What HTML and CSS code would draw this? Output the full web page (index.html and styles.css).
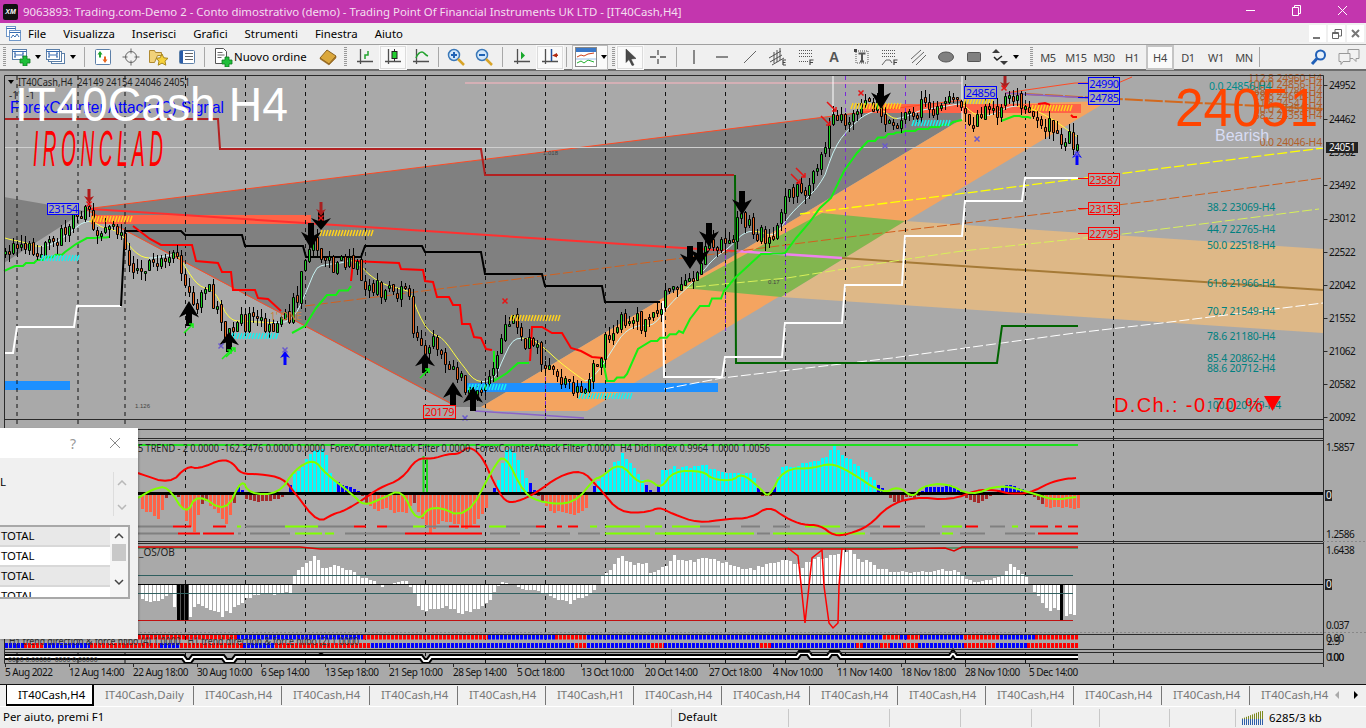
FILE: index.html
```html
<!DOCTYPE html>
<html lang="it">
<head>
<meta charset="utf-8">
<title>9063893: Trading.com-Demo 2</title>
<link rel="stylesheet" href="styles.css">
</head>
<body>
<div class="app">
  <header class="titlebar">
    <span class="logo">XM</span>
    <span class="title">9063893: Trading.com-Demo 2 - Conto dimostrativo (demo) - Trading Point Of Financial Instruments UK LTD - [IT40Cash,H4]</span>
    <div class="wincontrols">
      <svg width="46" height="23" viewBox="0 0 46 23"><path class="wc" d="M18 10.5h9"/></svg>
      <svg width="46" height="23" viewBox="0 0 46 23"><path class="wc" d="M18.5 7.5h6v8h-6zM20.5 7.5v-2h6v8h-2"/></svg>
      <svg width="46" height="23" viewBox="0 0 46 23"><path class="wc" d="M18 6l9 9M27 6l-9 9"/></svg>
    </div>
  </header>

  <nav class="menubar">
    <svg class="menuicon" width="16" height="17" viewBox="0 0 16 17"><rect x="1.5" y="1.5" width="9" height="10" class="i-doc"/><rect x="4.5" y="5.5" width="11" height="10" class="i-doc"/><path class="i-blue" d="M1.5 3.5h9M4.5 7.5h11M6 13l2-3 2 2 2-3 2 3"/></svg>
    <span class="menu">File</span><span class="menu">Visualizza</span><span class="menu">Inserisci</span><span class="menu">Grafici</span><span class="menu">Strumenti</span><span class="menu">Finestra</span><span class="menu">Aiuto</span>
    <div class="mdi">
      <span class="mdibtn"><svg width="16" height="16" viewBox="0 0 16 16"><path class="i-gray2" d="M3 12h7"/></svg></span>
      <span class="mdibtn"><svg width="16" height="16" viewBox="0 0 16 16"><path class="i-gray" d="M3.5 6.5h6v6h-6zM6 6V3.5h6.5V10H10M3.5 7.5h6"/></svg></span>
      <span class="mdibtn"><svg width="16" height="16" viewBox="0 0 16 16"><path class="i-gray2" d="M4 4l7 7M11 4l-7 7"/></svg></span>
    </div>
  </nav>

  <div class="toolbar">
    <i class="grip"></i>
    <span class="btn wide"><svg width="20" height="18" viewBox="0 0 20 18"><rect x="1.5" y="1.5" width="14" height="10" class="i-win"/><path class="i-blue" d="M1.5 3.5h14M4 9V5M3 5h2M3 9h2M12 9V5M11 5h2M11 9h2M4 7h8"/><path class="i-plus" d="M9 11h3V8h4v3h3v4h-3v3h-4v-3H9z"/></svg><b class="caret"></b></span>
    <span class="btn wide"><svg width="20" height="18" viewBox="0 0 20 18"><rect x="5.5" y="5.5" width="13" height="10" class="i-win"/><rect x="2.5" y="3.5" width="13" height="10" class="i-win"/><rect x="0.5" y="1.5" width="13" height="10" class="i-win"/><path class="i-blue" d="M.5 3.5h13M3 9V5M2 5h2M2 9h2M11 9V5M10 5h2M10 9h2M3 7h8"/></svg><b class="caret"></b></span>
    <i class="sep"></i>
    <span class="btn"><svg width="18" height="18" viewBox="0 0 18 18"><rect x="1.5" y="1.5" width="15" height="15" rx="1" class="i-win"/><path class="i-green" d="M6 3L3.500 6.500h1.500v3h2v-3h1.500z"/><path class="i-orange" d="M11 15l2.500-3.500H12v-3h-2v3H8.500z"/></svg></span>
    <span class="btn"><svg width="18" height="18" viewBox="0 0 18 18"><circle cx="9" cy="9" r="5.500" class="i-gray"/><path class="i-gray" d="M9 .5v5M9 12.500v5M.5 9h5M12.500 9h5"/></svg></span>
    <span class="btn"><svg width="20" height="18" viewBox="0 0 20 18"><path class="i-folder" d="M.5 2.500h5l1 2h6v3h-4l-3 7H.5z"/><path class="i-star" d="M13 6l1.800 3.800 4.200.5-3 2.800.8 4.100-3.800-2.100-3.800 2.100.8-4.100-3-2.800 4.200-.5z"/></svg></span>
    <span class="btn"><svg width="18" height="18" viewBox="0 0 18 18"><rect x="1.500" y="2.500" width="15" height="13" rx="1" class="i-win"/><path class="i-blue2" d="M2 3h3v12H2z"/><path class="i-gray" d="M7 5.500h8M7 8.500h8M7 11.500h8"/></svg></span>
    <i class="sep s2"></i>
    <span class="btn order"><svg width="19" height="20" viewBox="0 0 19 20"><path class="i-docw" d="M1.500 1.500h8l3 3v12h-11z"/><path class="i-gray" d="M3.500 5.500h5M3.500 8h7M3.500 10.500h4"/><path class="i-plus" d="M8 13h3v-3h4v3h3v4h-3v3h-4v-3H8z"/></svg><span class="ordertext">Nuovo ordine</span></span>
    <span class="btn"><svg width="18" height="18" viewBox="0 0 18 18"><path class="i-book" d="M1 10l7-8 9 6-7 8z"/><path class="i-bookb" d="M1 10l9 6 7-8v2l-7 7-9-6z"/></svg></span>
    <i class="grip mid"></i>
    <span class="btn"><svg width="18" height="18" viewBox="0 0 18 18"><path class="i-axis" d="M4.500 1v15M1 13.500h16"/><path class="i-green2" d="M9 11V7h3V3"/></svg></span>
    <span class="btn on"><svg width="18" height="18" viewBox="0 0 18 18"><path class="i-axis" d="M4.500 1v15M1 13.500h16"/><path class="i-cdl" d="M10.500 1v12"/><rect x="8" y="3.500" width="5" height="7" class="i-cdlb"/></svg></span>
    <span class="btn"><svg width="18" height="18" viewBox="0 0 18 18"><path class="i-axis" d="M4.500 1v15M1 13.500h16"/><path class="i-green2" d="M4 10c2-5 4-6 6-6s3 3 6 4"/></svg></span>
    <i class="sep nar"></i>
    <span class="btn"><svg width="18" height="18" viewBox="0 0 18 18"><circle cx="7" cy="7" r="5.500" class="i-lens"/><path class="i-blue3" d="M4 7h6M7 4v6"/><path class="i-handle" d="M11 11l6 6"/></svg></span>
    <span class="btn"><svg width="18" height="18" viewBox="0 0 18 18"><circle cx="7" cy="7" r="5.500" class="i-lens"/><path class="i-blue3" d="M4 7h6"/><path class="i-handle" d="M11 11l6 6"/></svg></span>
    <i class="sep s3"></i>
    <span class="btn"><svg width="18" height="18" viewBox="0 0 18 18"><path class="i-axis" d="M4.500 1v15M1 13.500h16"/><path class="i-greenf" d="M8 3.500l4 4-4 4z"/></svg></span>
    <span class="btn on"><svg width="18" height="18" viewBox="0 0 18 18"><path class="i-axis" d="M4.500 1v15M1 13.500h16"/><path class="i-bluev" d="M10.500 1v12"/><path class="i-redf" d="M11 7.500l5-2.500v1.500h1V8h-1v1.500z"/></svg></span>
    <i class="sep nar2"></i>
    <span class="btn tmpl"><svg width="22" height="20" viewBox="0 0 22 20"><rect x=".5" y=".5" width="21" height="19" class="i-tmpl"/><path class="i-tbar" d="M1 1h20v4H1z"/><path class="i-tr" d="M2 10l4-2 3 1 4-2 6-1"/><path class="i-tg" d="M2 16l4-2 3 2 4-3 6 2"/><path class="i-tl" d="M1 12h20"/></svg><b class="caret"></b></span>
    <i class="grip mid2"></i>
    <span class="btn on"><svg width="18" height="18" viewBox="0 0 18 18"><path class="i-cursor" d="M5 1l10 9.500-5 .5 3 6-2 .5-3-6-3 3z"/></svg></span>
    <span class="btn"><svg width="18" height="18" viewBox="0 0 18 18"><path class="i-axis" d="M9 2v5M9 11v5M1 9h6M11 9h6"/></svg></span>
    <i class="sep s4"></i>
    <span class="btn"><svg width="18" height="18" viewBox="0 0 18 18"><path class="i-axis" d="M9 2v14"/></svg></span>
    <span class="btn"><svg width="18" height="18" viewBox="0 0 18 18"><path class="i-axis" d="M3 9h12"/></svg></span>
    <span class="btn"><svg width="18" height="18" viewBox="0 0 18 18"><path class="i-gray" d="M3 15L15 3"/></svg></span>
    <span class="btn"><svg width="20" height="18" viewBox="0 0 20 18"><path class="i-axis1" d="M1 10l12-7M2 14l12-7M4 17l12-7M6 15V4M9 14V2M12 12V0"/><path class="i-letter" d="M15 17v-5h3M15 14.500h2.500M15 17h3"/></svg></span>
    <span class="btn"><svg width="18" height="18" viewBox="0 0 18 18"><path class="i-dot" d="M2 2.500h13M2 5.500h13M2 8.500h13M2 13.500h9"/><path class="i-letter" d="M13 17v-5h3.500M13 14.500h3"/></svg></span>
    <span class="btn"><span class="glyph-a">A</span></span>
    <span class="btn"><svg width="18" height="18" viewBox="0 0 18 18"><rect x="3" y="3" width="12" height="12" class="i-dotbox"/><path class="i-tt" d="M5.500 5.500h7M9 5.500v8M7 13.500h4"/><rect x="1" y="1" width="3" height="3" class="i-hnd"/></svg></span>
    <span class="btn"><svg width="18" height="18" viewBox="0 0 18 18"><path class="i-dot" d="M1 2.500h14M1 5.500h14M1 8.500h14"/><path class="i-gray" d="M1 17l4-5h4l2 3"/><path class="i-letter" d="M13 17v-5h3.500M13 14.500h3"/></svg></span>
    <span class="btn"><svg width="18" height="18" viewBox="0 0 18 18"><path class="i-gray" d="M2 11L12 2M3 15L15 4M7 17L17 7"/></svg></span>
    <span class="btn"><svg width="18" height="14" viewBox="0 0 18 14"><ellipse cx="9" cy="7" rx="7.500" ry="5" class="i-shape"/></svg></span>
    <span class="btn"><svg width="16" height="12" viewBox="0 0 16 12"><rect x="1.500" y="1.500" width="13" height="9" rx="1" class="i-shape"/></svg></span>
    <span class="btn wide"><svg width="18" height="18" viewBox="0 0 18 18"><path class="i-darkf" d="M5 1l4 4H1zM13 17l-4-4h8z"/><path class="i-check" d="M3 9l3 3 5-4"/></svg><b class="caret"></b></span>
    <i class="grip mid3"></i>
    <span class="tf">M5</span><span class="tf">M15</span><span class="tf">M30</span><span class="tf">H1</span><span class="tf on">H4</span><span class="tf">D1</span><span class="tf">W1</span><span class="tf">MN</span>
    <i class="sep s5"></i>
    <span class="btn push"><svg width="18" height="18" viewBox="0 0 18 18"><circle cx="10.500" cy="7" r="4.500" class="i-lens2"/><path class="i-handle2" d="M7 10.500L2 16"/></svg></span>
    <span class="btn"><svg width="24" height="18" viewBox="0 0 24 18"><path class="i-bub" d="M11 1.500h11v9h-3v3l-3-3h-5z"/><path class="i-bub" d="M2 5.500h11v8H6l-2 3v-3H2z"/></svg></span>
  </div>

  <main class="chart">
    <svg class="plot" width="1366" height="613" viewBox="0 70 1366 613">
      <rect class="bg" x="0" y="70" width="1366" height="613"/>
      <!-- main pane shapes -->
      <polygon class="dark" points="4,196 85,210 4,262"/>
      <polygon class="dark" points="85,208 962,99 962,118 481,406 456,406"/>
      <polygon class="orange" points="481,406 962,118 962,104 1108,100 587,410 495,410"/>
      <polygon class="tan" points="905,220 1323,248 1323,332 781,296"/>
      <polygon class="greenarea" points="683,287 822,212 905,220 781,296"/>
      <rect class="coral" x="91" y="214" width="220" height="9"/>
      <rect class="coral" x="860" y="103" width="221" height="9"/>
      <rect class="dodger" x="5" y="380" width="65" height="9"/>
      <rect class="dodger" x="466" y="382" width="252" height="9"/>
      <line class="pinkl" x1="465" y1="82" x2="962" y2="82"/>
      <path class="whitel1" d="M833 75V113M962 75V119"/>

      <!-- diagonal lines -->
      <line class="edge" x1="85" y1="208" x2="456" y2="405"/>
      <line class="edge" x1="85" y1="208" x2="962" y2="99"/>
      <polyline class="hotred" points="91,208 320,223 683,247 735,250"/>
      <polyline class="violet" points="735,250 842,257"/>
      <polyline class="brownl" points="842,257 1323,289"/>
      <polyline class="dash-orange" points="305,305 683,257 857,235 1151,200 1323,177"/>
      <polyline class="dash-yellow" points="800,213 1323,147"/>
      <polyline class="dash-lime" points="683,287 787,277 901,259 962,250 1075,238 1123,233 1319,208"/>
      <polyline class="dash-white" points="664,388 722,377 892,357 1075,332 1162,322 1323,302"/>
      <polyline class="thickdash" points="1005,92 1118,98 1323,108"/>
      <polyline class="edge" points="1005,92 1075,82 1118,82 1132,76"/>
      <polyline class="purple" points="1005,92 1088,97"/>
      <polyline class="purple" points="475,410 584,417"/>

      <!-- vertical separators -->
      <path class="vdash" d="M17 75V662M78 75V662M125 75V662M185.500 75V662M245.500 75V662M305.500 75V662M365.500 75V662M425.500 75V662M485.500 75V662M545.500 75V662M605.500 75V662M665.500 75V662M725.500 75V662M785.500 75V662M845.500 75V662M905.500 75V662M965.500 75V662M1025.500 75V662M1113.500 75V662"/>
      <path class="vdash-p" d="M545.500 360V418M725.500 230V330M785.500 220V295M845.500 75V240M905.500 75V210M965.500 100V190"/>

      <line class="lastprice" x1="4" y1="146.500" x2="1323" y2="146.500"/>

      <!-- stepped lines -->
      <polyline class="brick" points="5,118 218,118 220,148 481,148 485,174 734,174"/>
      <polyline class="fgreen" points="735,174 736,362 997,362 1002,325 1078,325"/>
      <polyline class="wstep" points="4,352 13,352 17,326 74,326 77,305 121,305"/>
      <polyline class="bstep" points="121,305 125,230 181,230 185,234 242,234 245,245 303,245 306,256 361,256 365,245 422,245 425,251 481,251 485,273 542,273 545,285 602,285 605,301 660,301"/>
      <polyline class="wstep" points="663,300 664,376 722,376 725,356 782,356 785,322 842,322 845,284 902,284 905,235 962,235 965,200 1022,200 1025,177 1078,177"/>
      <polyline class="rstep" points="133,225 150,238 161,244 192,244 196,260 218,262 222,271 231,271 233,289 255,289 258,297 268,298 281,310"/>
      <polyline class="rstep" points="351,280 353,260 375,261 399,262 401,268 423,269 425,280 433,281 437,296 449,296 453,304 460,304 462,323 470,323 474,336 481,337 486,348 492,349"/>
      <polyline class="rstep" points="530,360 532,326 542,326 552,332 562,332 571,347 581,350 592,356 603,357"/>
      <polyline class="rstep" points="1038,103 1045,102 1050,104"/>
      <polyline class="rstep" points="1071,114 1073,116 1077,116"/>
      <polyline class="gstep" points="4,270 15,265 37,259 65,251 76,243 87,237 109,236"/>
      <polyline class="gstep" points="292,332 305,325 316,307 327,294 351,285"/>
      <polyline class="gstep" points="494,350 494,380 507,372 518,362 529,362"/>
      <polyline class="gstep" points="603,360 607,380 627,373 638,348 651,340 679,330 683,332 690,318 700,305 724,290 735,277 748,265 761,253 785,252 796,237 809,222 820,207 831,197 844,170 857,152 868,140 888,133 905,130 931,126 953,121 962,119"/>
      <polyline class="gstep" points="1001,120 1014,115 1031,117"/>

      <g id="candles"></g>
      <g id="marks"></g>

      <!-- main pane text -->
      <path class="blackf" d="M8 79h6l-3 4z"/>
      <text class="lab dark-t" x="18" y="85" textLength="172" lengthAdjust="spacingAndGlyphs">IT40Cash,H4  24149 24154 24046 24051</text>
      <text class="lab dark-t" x="9" y="98">-1'</text>
      <text class="lab dark-t" x="26" y="98">-1</text>
      <text class="big-blue" x="10" y="112" textLength="214" lengthAdjust="spacingAndGlyphs">ForexCounter Attack (C) Signal</text>
      <text class="big-white" x="15" y="120" textLength="273" lengthAdjust="spacingAndGlyphs">IT40Cash H4</text>
      <text class="ironclad" transform="translate(33 165) scale(1 2.6)" textLength="130" lengthAdjust="spacing">IRONCLAD</text>
      <text class="tiny" x="135" y="407">1.126</text>
      <text class="tiny" x="543" y="154">1.018</text>
      <text class="tiny" x="768" y="283">0.17</text>
      <text class="lab brown-t" x="270" y="319">1' ONE</text>

      <g class="stack">
        <text x="1322" y="81">112.8 24960-H4</text>
        <text x="1322" y="87">100.0 24856-H4</text>
        <text x="1322" y="94">88.6 24780-H4</text>
        <text x="1322" y="99">78.6 24676-H4</text>
        <text x="1322" y="106">61.8 24547-H4</text>
        <text x="1322" y="112">50.0 24451-H4</text>
        <text x="1322" y="118">38.2 24355-H4</text>
        <text x="1322" y="145">0.0 24046-H4</text>
      </g>
      <text class="fib" x="1209" y="89">0.0 24856-H4</text>
      <g class="fibs">
        <text x="1207" y="210">38.2 23069-H4</text>
        <text x="1207" y="232">44.7 22765-H4</text>
        <text x="1207" y="248">50.0 22518-H4</text>
        <text x="1207" y="286">61.8 21966-H4</text>
        <text x="1207" y="314">70.7 21549-H4</text>
        <text x="1207" y="339">78.6 21180-H4</text>
        <text x="1207" y="361">85.4 20862-H4</text>
        <text x="1207" y="371">88.6 20712-H4</text>
        <text x="1207" y="408">100.0 20179-H4</text>
      </g>
      <text class="bigprice" x="1175" y="125" textLength="143" lengthAdjust="spacingAndGlyphs">24051</text>
      <text class="bearish" x="1215" y="140">Bearish</text>
      <text class="dch" x="1114" y="411" textLength="149">D.Ch.: -0.70 %</text>
      <path class="redf" d="M1264 395h17l-8.500 15z"/>

      <path class="tick-red" d="M1078 177.500h10M1078 207.500h10M1078 232.500h10"/>
      <path class="tick-blue" d="M1078 82.500h10M1078 96.500h10"/>
      <g class="pl-blue">
        <rect x="1088.500" y="76.500" width="31" height="13"/><text x="1104" y="87">24990</text>
        <rect x="1088.500" y="90.500" width="31" height="13"/><text x="1104" y="101">24785</text>
        <rect x="964.500" y="85.500" width="32" height="12"/><text x="980.500" y="96">24856</text>
        <rect x="47.500" y="202.500" width="31" height="11"/><text x="63" y="212">23154</text>
      </g>
      <g class="pl-red">
        <rect x="1088.500" y="172.500" width="31" height="12"/><text x="1104" y="183">23587</text>
        <rect x="1088.500" y="201.500" width="31" height="12"/><text x="1104" y="212">23153</text>
        <rect x="1088.500" y="226.500" width="31" height="12"/><text x="1104" y="237">22795</text>
        <rect x="423.500" y="404.500" width="32" height="13"/><text x="439.500" y="415">20179</text>
      </g>

      <!-- pane 2 -->
      <line class="greenbar" x1="138" y1="444" x2="1078" y2="444"/>
      <path class="greenv" d="M423.500 455V492M427 457V492"/>
      <g id="hist2"></g>
      <line class="zero2" x1="5" y1="492.500" x2="1323" y2="492.500"/>
      <g id="segs"></g>
      <polyline class="p2red" points="138,472 170,483 187,465 199,468 222,458 233,462 241,473 260,473 283,477 295,492 318,522 333,513 344,510 364,498 379,487 402,478 417,457 432,458 448,453 459,453 469,445 482,455 494,482 505,501 517,501 536,492 559,475 582,469 597,485 600,488 620,512 649,511 659,506 673,513 698,522 727,518 751,517 769,505 786,517 803,524 820,524 834,535 849,533 869,525 888,505 913,496 952,499 976,489 996,489 1010,493 1030,492 1049,482 1064,478 1076,477"/>
      <polyline class="p2lime" points="138,497 153,488 168,485 186,515 197,492 226,512 242,477 249,493 279,493 295,468 314,458 325,472 352,493 364,505 383,497 402,488 417,522 432,503 467,518 494,465 505,453 524,493 543,502 574,503 595,477 600,477 620,461 639,483 649,478 661,488 673,470 703,470 712,478 732,480 742,472 761,488 769,497 783,468 815,467 830,462 849,470 883,493 898,485 913,497 922,485 947,482 971,495 1000,483 1035,493 1054,499 1076,496"/>
      <text class="pane-t" x="138" y="451" textLength="632" lengthAdjust="spacingAndGlyphs">5 TREND - 2 0.0000 -162.3476 0.0000 0.0000  ForexCounterAttack Filter 0.0000  ForexCounterAttack Filter 0.0000  H4 Didi index 0.9964 1.0000 1.0056</text>

      <!-- pane 3 -->
      <g id="hist3"></g>
      <path class="level" d="M138 574.500H1073M138 592.500H1073"/>
      <line class="level-r" x1="138" y1="619.500" x2="1073" y2="619.500"/>
      <line class="zero3" x1="5" y1="583.500" x2="1323" y2="583.500"/>
      <polyline class="p3top" points="138,547 1078,547"/>
      <polyline class="p3red" points="138,546 300,546 320,548 880,548 945,547 954,550 962,546 1078,546"/>
      <polyline class="p3spike" points="788,547 798,555 801,583 805,622 809,585 812,557 822,549 824,585 829,622 833,627 838,622 839,585 842,547"/>
      <text class="pane-t" x="139" y="555">_OS/OB</text>

      <!-- pane 4 / 5 -->
      <g id="squares"></g>
      <text class="pane-t faint" x="9" y="644" textLength="350" lengthAdjust="spacingAndGlyphs">H1 trend direction &amp; force hilbo (4) 1.0000   H1 trend direction &amp; force hilbo (2) 1.0000</text>
      <polyline class="hilo-b" points="5,656 183,656 186,660 190,660 193,656 223,656 226,660 233,660 236,656 421,656 424,660 428,660 431,656 797,656 800,652 808,652 811,656 828,656 831,652 838,652 841,656 950,656 953,652 956,656 1078,656"/>
      <polyline class="hilo-w" points="5,656 183,656 186,660 190,660 193,656 223,656 226,660 233,660 236,656 421,656 424,660 428,660 431,656 797,656 800,652 808,652 811,656 828,656 831,652 838,652 841,656 950,656 953,652 956,656 1078,656"/>
      <path class="blackf" d="M317 654l4-3 4 3z"/>
      <text class="tiny2" x="8" y="661">0000 0.00000  0000 0.00000</text>

      <!-- frames -->
      <path class="frame" d="M4.500 74.500H1323.500V662.500H4.500zM4.500 418.500H1323.500M4.500 428.500H1323.500M4.500 437.500H1323.500M4.500 439.500H1323.500M4.500 540.500H1323.500M4.500 542.500H1323.500M4.500 633.500H1323.500M4.500 648.500H1323.500M4.500 651.500H1323.500"/>
      <line class="dots" x1="4" y1="631.500" x2="1366" y2="631.500"/>
      <line class="dots" x1="1323" y1="540.500" x2="1366" y2="540.500"/>
      <path class="frame" d="M1323.500 662.500V666M5.500 662.500V666M69.500 662.500V666M133.500 662.500V666M197.500 662.500V666M261.500 662.500V666M325.500 662.500V666M389.500 662.500V666M453.500 662.500V666M517.500 662.500V666M581.500 662.500V666M645.500 662.500V666M709.500 662.500V666M773.500 662.500V666M837.500 662.500V666M901.500 662.500V666M965.500 662.500V666M1029.500 662.500V666"/>
      <path class="frame" d="M1323.500 84.500h4M1323.500 118.500h4M1323.500 184.500h4M1323.500 218.500h4M1323.500 251.500h4M1323.500 284.500h4M1323.500 317.500h4M1323.500 350.500h4M1323.500 383.500h4M1323.500 416.500h4"/>

      <!-- price axis -->
      <g class="axis">
        <text x="1329" y="88">24952</text>
        <text x="1329" y="122">24462</text>
        <text x="1329" y="155">23982</text>
        <text x="1329" y="188">23492</text>
        <text x="1329" y="221">23012</text>
        <text x="1329" y="255">22522</text>
        <text x="1329" y="288">22042</text>
        <text x="1329" y="321">21552</text>
        <text x="1329" y="354">21062</text>
        <text x="1329" y="387">20582</text>
        <text x="1329" y="420">20092</text>
        <text x="1326" y="450">1.5857</text>
        <text x="1326" y="537">1.2586</text>
        <text x="1326" y="553">1.6438</text>
        <text x="1326" y="628">0.037</text>
        <text x="1326" y="641">0.00</text>
        <text x="1327" y="644">2.5</text>
        <text x="1326" y="660">0.00</text>
        <text x="1328" y="660">100</text>
      </g>
      <rect class="tagbg" x="1326" y="141" width="32" height="11"/>
      <text class="tag" x="1329" y="150">24051</text>
      <rect class="tagbg" x="1325" y="489" width="7" height="11"/>
      <text class="tag" x="1326" y="498">0</text>
      <rect class="tagbg" x="1325" y="578" width="7" height="11"/>
      <text class="tag" x="1326" y="587">0</text>

      <!-- time axis -->
      <g class="axis">
        <text x="5" y="675">5 Aug 2022</text>
        <text x="69" y="675">12 Aug 14:00</text>
        <text x="133" y="675">22 Aug 18:00</text>
        <text x="197" y="675">30 Aug 10:00</text>
        <text x="261" y="675">6 Sep 14:00</text>
        <text x="325" y="675">13 Sep 18:00</text>
        <text x="389" y="675">21 Sep 10:00</text>
        <text x="453" y="675">28 Sep 14:00</text>
        <text x="517" y="675">5 Oct 18:00</text>
        <text x="581" y="675">13 Oct 10:00</text>
        <text x="645" y="675">20 Oct 14:00</text>
        <text x="709" y="675">27 Oct 18:00</text>
        <text x="773" y="675">4 Nov 10:00</text>
        <text x="837" y="675">11 Nov 14:00</text>
        <text x="901" y="675">18 Nov 18:00</text>
        <text x="965" y="675">28 Nov 10:00</text>
        <text x="1029" y="675">5 Dec 14:00</text>
      </g>
    </svg>

    <section class="dialog">
      <div class="dlghead"><span class="dlgq">?</span><svg width="12" height="12" viewBox="0 0 12 12"><path class="i-x" d="M1 1l10 10M11 1L1 11"/></svg></div>
      <div class="dlgbody">
        <span class="dlgl">L</span>
        <div class="spin"><svg width="10" height="6" viewBox="0 0 10 6"><path class="i-chev" d="M1 5l4-4 4 4"/></svg><svg width="10" height="6" viewBox="0 0 10 6"><path class="i-chev" d="M1 1l4 4 4-4"/></svg></div>
      </div>
      <div class="list">
        <div class="rows">
          <div class="row alt">TOTAL</div>
          <div class="row">TOTAL</div>
          <div class="row alt">TOTAL</div>
          <div class="row">TOTAL</div>
        </div>
        <div class="lscroll">
          <svg width="10" height="7" viewBox="0 0 10 7"><path class="i-chev2" d="M1 6l4-4 4 4"/></svg>
          <i class="thumb"></i>
          <svg width="10" height="7" viewBox="0 0 10 7"><path class="i-chev2" d="M1 1l4 4 4-4"/></svg>
        </div>
      </div>
    </section>
  </main>

  <div class="tabs">
    <span class="tab active">IT40Cash,H4</span>
    <span class="tab daily">IT40Cash,Daily</span>
    <span class="tab">IT40Cash,H4</span>
    <span class="tab">IT40Cash,H4</span>
    <span class="tab">IT40Cash,H4</span>
    <span class="tab">IT40Cash,H4</span>
    <span class="tab">IT40Cash,H1</span>
    <span class="tab">IT40Cash,H4</span>
    <span class="tab">IT40Cash,H4</span>
    <span class="tab">IT40Cash,H4</span>
    <span class="tab">IT40Cash,H4</span>
    <span class="tab">IT40Cash,H4</span>
    <span class="tab">IT40Cash,H4</span>
    <span class="tab">IT40Cash,H4</span>
    <span class="tab last">IT40Cash,H4</span>
    <span class="tabarrows"><b class="ar-l"></b><b class="ar-r"></b></span>
  </div>

  <footer class="status">
    <span class="st help">Per aiuto, premi F1</span>
    <span class="st def">Default</span>
    <span class="st w101"></span>
    <span class="st w71"></span>
    <span class="st w71"></span>
    <span class="st w68"></span>
    <span class="st w70"></span>
    <span class="st w66"></span>
    <span class="st conn"><svg width="24" height="14" viewBox="0 0 24 14"><path class="m-olive" d="M1 4.500h22"/><path class="m-blue" d="M1 11h22"/><path class="m-mask" d="M0 0h20L0 8z"/></svg>6285/3 kb</span>
  </footer>
</div>
<script src="chart.js"></script>
</body>
</html>
```
FILE: styles.css
```css
*{box-sizing:border-box}
html,body{margin:0;padding:0;height:100%;overflow:hidden}
body{background:#f0f0f0;font-family:"Noto Sans","Open Sans",sans-serif;color:#000}
.app{display:flex;flex-direction:column;width:1366px;height:728px}
.titlebar{height:23px;background:#c336ae;display:flex;align-items:center;color:#f4dff0;flex:none}
.logo{width:15px;height:16px;margin:0 5px 0 3px;background:#111;color:#fff;font:italic bold 7px/16px "Liberation Sans",sans-serif;text-align:center;border-radius:2px}
.title{font-size:11.4px;white-space:nowrap;width:660px}
.wincontrols{margin-left:auto;display:flex}
.wc{fill:none;stroke:#fff;stroke-width:1}
.menubar{height:21px;display:flex;align-items:center;font-size:11.4px;flex:none;position:relative;padding-left:5px}
.menuicon{margin-right:7px;flex:none}
.menu{margin-right:17px}
.mdi{margin-left:auto;margin-right:2px;display:flex;gap:2px}
.mdibtn{width:17px;height:17px;background:#fff;display:flex;align-items:center;justify-content:center}
.toolbar{height:27px;border-top:1px solid #a0a0a0;border-bottom:2px solid #6e6e6e;display:flex;align-items:center;padding-left:3px;flex:none;background:#f0f0f0}
.grip{width:3px;height:20px;margin-right:2px;flex:none;background:repeating-linear-gradient(#999 0 1px,transparent 1px 2px)}
.grip.mid{margin-left:2px;margin-right:4px}
.grip.mid2{margin-left:4px;margin-right:1px}
.grip.mid3{margin-left:7px;margin-right:1px}
.sep{width:1px;height:20px;background:#a8a8a8;flex:none;margin:0 4px 0 6px}
.sep.s2{margin:0 4px 0 3px}
.sep.s3{margin:0 5px 0 4px}
.sep.s4{margin:0 3px 0 4px}
.sep.s5{margin:0 3px 0 1px}
.sep.nar{margin:0 3px}
.sep.nar2{margin:0 5px 0 2px}
.btn{width:28px;height:25px;display:flex;align-items:center;justify-content:center;flex:none}
.btn.wide{width:35px;justify-content:flex-start;padding-left:3px;gap:4px}
.btn.on{background:#fafafa;outline:1px solid #dcdcdc;outline-offset:-2px}
.btn.order{width:105px;justify-content:flex-start;padding-left:5px;gap:1px}
.btn.tmpl{width:36px;justify-content:flex-start;padding-left:3px;gap:4px;background:#fafafa;outline:1px solid #bbb;outline-offset:-1px}
.btn.push{margin-left:auto;margin-right:3px}
.btn:last-child{width:26px;margin-right:4px}
.ordertext{font-size:11.4px;margin-bottom:1px;white-space:nowrap}
.caret{width:0;height:0;border:3.5px solid transparent;border-top:4px solid #000;border-bottom:0;flex:none}
.glyph-a{font:bold 14px "Liberation Sans",sans-serif;color:#555}
.tf{width:28px;text-align:center;font:11px/25px "Noto Sans",sans-serif;color:#444;flex:none;letter-spacing:-.3px;height:25px}
.tf.on{background:#fafafa;outline:2px solid #c4c4c4;outline-offset:-2px}

.i-doc{fill:#fff;stroke:#6f97c9}
.i-blue{fill:none;stroke:#3a6db0}
.i-blue2{fill:#2a5ca8}
.i-blue3{fill:none;stroke:#1f63b5;stroke-width:2}
.i-gray{fill:none;stroke:#666}
.i-gray2{fill:none;stroke:#777;stroke-width:2}
.i-win{fill:#fff;stroke:#5c7fa8}
.i-plus{fill:#1fbf3a;stroke:#0d7a1e;stroke-width:.8}
.i-green{fill:#1da32e}
.i-orange{fill:#e8641c}
.i-folder{fill:#f2d27a;stroke:#b08a30}
.i-star{fill:#f6d23c;stroke:#a8871e}
.i-docw{fill:#fff;stroke:#555}
.i-book{fill:#dba83c;stroke:#8a6220}
.i-bookb{fill:#a8701e;stroke:#8a6220;stroke-width:.5}
.i-axis{fill:none;stroke:#505050;stroke-width:1.300}
.i-axis1{fill:none;stroke:#505050}
.i-green2{fill:none;stroke:#22a22e;stroke-width:1.500}
.i-cdl{stroke:#333;fill:none}
.i-cdlb{fill:#22d030;stroke:#222}
.i-lens{fill:#d4e8fa;stroke:#3a78b8;stroke-width:1.500}
.i-lens2{fill:#e6f0fb;stroke:#2060b8;stroke-width:2}
.i-handle{stroke:#d8a428;stroke-width:2.500;fill:none}
.i-handle2{stroke:#2060b8;stroke-width:3;fill:none}
.i-greenf{fill:#19a82b}
.i-bluev{fill:none;stroke:#1f4f9e;stroke-width:1.500}
.i-redf{fill:#b22a10}
.i-tmpl{fill:#fff;stroke:#888}
.i-tbar{fill:#3a78c8}
.i-tr{fill:none;stroke:#d04018}
.i-tg{fill:none;stroke:#22b02e}
.i-tl{stroke:#9cc0e8;fill:none}
.i-cursor{fill:#4a4a4a;stroke:#333;stroke-width:.5}
.i-letter{fill:none;stroke:#444;stroke-width:1.200}
.i-dot{fill:none;stroke:#555;stroke-dasharray:1 1}
.i-dotbox{fill:none;stroke:#555;stroke-dasharray:1 1}
.i-tt{fill:none;stroke:#555;stroke-width:2}
.i-hnd{fill:#444}
.i-shape{fill:#808080;stroke:#555}
.i-darkf{fill:#3a3a3a}
.i-check{fill:none;stroke:#222;stroke-width:1.500}
.i-bub{fill:#f2f2f2;stroke:#999}

.chart{position:relative;height:613px;flex:none;overflow:hidden}
.plot{display:block}
.plot text{white-space:pre}
.bg{fill:#a9a9a9}
.dark{fill:#808080}
.orange{fill:#f4a460}
.tan{fill:#deb887}
.greenarea{fill:#82b64f}
.coral{fill:#ff6347}
.dodger{fill:#1e90ff}
.pinkl{stroke:#ffb6c1;stroke-width:1}
.whitel1{stroke:#fff;fill:none}
.edge{fill:none;stroke:#ff4a24;stroke-width:1}
.hotred{fill:none;stroke:#ff3030;stroke-width:2}
.violet{fill:none;stroke:#ee82ee;stroke-width:2.500}
.brownl{fill:none;stroke:#a67a36;stroke-width:2}
.dash-orange{fill:none;stroke:#d2601e;stroke-width:1;stroke-dasharray:10 3}
.dash-yellow{fill:none;stroke:#ffff00;stroke-width:1.300;stroke-dasharray:10 3}
.dash-lime{fill:none;stroke:#d8f05a;stroke-width:1;stroke-dasharray:10 3}
.dash-white{fill:none;stroke:#fff;stroke-width:1;stroke-dasharray:10 3}
.thickdash{fill:none;stroke:#d2691e;stroke-width:2;stroke-dasharray:18 2}
.purple{fill:none;stroke:#8a64c8;stroke-width:1.500}
.vdash{fill:none;stroke:#111;stroke-width:1;stroke-dasharray:4 4}
.vdash-p{fill:none;stroke:#7a28d8;stroke-width:1;stroke-dasharray:4 4}
.lastprice{stroke:#cfcfcf;stroke-width:1}
.brick{fill:none;stroke:#b22222;stroke-width:2}
.fgreen{fill:none;stroke:#006400;stroke-width:2}
.wstep{fill:none;stroke:#fff;stroke-width:2}
.bstep{fill:none;stroke:#000;stroke-width:2}
.rstep{fill:none;stroke:#f00;stroke-width:2}
.gstep{fill:none;stroke:#14f014;stroke-width:2}
.blackf{fill:#000}
.lab{font:10px "Noto Sans",sans-serif}
.dark-t{fill:#222}
.brown-t{fill:#c8803c}
.big-blue{font:17px "Liberation Sans",sans-serif;fill:#0000ff}
.big-white{font:49px "Liberation Sans",sans-serif;fill:#fff}
.ironclad{font:italic 19px "Liberation Sans",sans-serif;fill:#f00}
.tiny{font:6px "Liberation Sans",sans-serif;fill:#444}
.tiny2{font:7px "Liberation Sans",sans-serif;fill:#333}
.stack text{font:10.500px "Noto Sans",sans-serif;fill:#b0602c;text-anchor:end;letter-spacing:-.2px}
.fib{font:10.500px "Noto Sans",sans-serif;fill:#008b8b;letter-spacing:-.2px}
.fibs text{font:10.500px "Noto Sans",sans-serif;fill:#008080;letter-spacing:-.2px}
.bigprice{font:53px "Liberation Sans",sans-serif;fill:#ff4500}
.bearish{font:16px "Liberation Sans",sans-serif;fill:#d8dcf4}
.dch{font:20px "Liberation Sans",sans-serif;fill:#f00}
.redf{fill:#f00}
.tick-red{stroke:#f00;fill:none}
.tick-blue{stroke:#00f;fill:none}
.pl-blue rect{fill:#a9a9a9;stroke:#00f}
.pl-blue text{font:11px "Noto Sans",sans-serif;fill:#00f;text-anchor:middle;letter-spacing:-.4px}
.pl-red rect{fill:#a9a9a9;stroke:#f00}
.pl-red text{font:11px "Noto Sans",sans-serif;fill:#f00;text-anchor:middle;letter-spacing:-.4px}
.greenbar{stroke:#1ee01e;stroke-width:2}
.greenv{fill:none;stroke:#1ee01e;stroke-width:2}
.zero2{stroke:#000;stroke-width:3}
.zero3{stroke:#000;stroke-width:1}
.p2red{fill:none;stroke:#f00;stroke-width:2;stroke-linejoin:round}
.p2lime{fill:none;stroke:#80ff00;stroke-width:2;stroke-linejoin:round}
.pane-t{font:10px "Noto Sans",sans-serif;fill:#222}
.faint{fill:#333}
.level{fill:none;stroke:#2f5f5f}
.level-r{stroke:#c01010}
.p3top{fill:none;stroke:#0a7a2a;stroke-width:1}
.p3red{fill:none;stroke:#e00000;stroke-width:1.500}
.p3spike{fill:none;stroke:#f00;stroke-width:1.500}
.hilo-b{fill:none;stroke:#000;stroke-width:6}
.hilo-w{fill:none;stroke:#fff;stroke-width:2}
.frame{fill:none;stroke:#2a2a2a;stroke-width:1}
.dots{stroke:#888;stroke-dasharray:2 2}
.axis text{font:10px "Noto Sans",sans-serif;fill:#111;letter-spacing:-.5px}
.tagbg{fill:#222}
.tag{font:10px "Noto Sans",sans-serif;fill:#f0f0f0;letter-spacing:-.5px}

.dialog{position:absolute;left:0;top:357px;width:138px;height:211px;background:#f0f0f0;font-size:11.4px;box-shadow:1px 1px 2px rgba(0,0,0,.25)}
.dlghead{height:30px;background:#fff;display:flex;align-items:center;justify-content:flex-end;padding-right:17px;gap:33px}
.dlgq{color:#999;font-size:14px}
.i-x{fill:none;stroke:#888;stroke-width:1}
.dlgbody{height:67px;display:flex;justify-content:space-between;align-items:flex-start;padding-top:16px;position:relative}
.spin{width:16px;height:44px;margin-right:9px;margin-top:-2px;border-left:1px solid #ddd;display:flex;flex-direction:column;justify-content:space-between;align-items:center;padding:8px 0 6px}
.i-chev{fill:none;stroke:#b8b8b8;stroke-width:1.500}
.i-chev2{fill:none;stroke:#444;stroke-width:1.500}
.list{width:130px;height:74px;border:2px solid #a8a8a8;border-left:0;background:#fff;display:flex;overflow:hidden}
.rows{width:110px}
.row{height:20px;line-height:18px;font-size:11.4px;padding-left:1px;border-bottom:2px solid #d8d8d8}
.row.alt{background:#e8e8e8}
.lscroll{width:18px;background:#f5f5f5;display:flex;flex-direction:column;align-items:center;padding:2px 0 0}
.lscroll svg{margin:3px 0}
.lscroll svg:last-child{margin-top:18px}
.thumb{width:14px;height:17px;background:#c8c8c8;margin-top:2px}

.tabs{height:23px;flex:none;display:flex;align-items:center;background:#f0f0f0;border-top:1px solid #111;border-bottom:1px solid #fff;padding-left:6px;position:relative;font-size:11.4px;white-space:nowrap;overflow:hidden}
.tab{width:88px;height:19px;line-height:17px;color:#777;padding-left:11px;border-right:1px solid #777;flex:none}
.tab.daily{width:100px}
.tab.active{background:#fff;color:#000;border:1px solid #000;border-width:0 2px 2px 1px;height:21px;line-height:19px;margin-top:-1px}
.tab.last{width:78px;border-right:0}
.tabarrows{position:absolute;right:8px;top:6px;display:flex;gap:15px;background:#f0f0f0}
.ar-l{border:4px solid transparent;border-right:4px solid #aaa;border-left:0}
.ar-r{border:4px solid transparent;border-left:4px solid #000;border-right:0}
.status{height:22px;flex:none;display:flex;align-items:center;font-size:11.4px;background:#f0f0f0}
.st{height:18px;line-height:16px;border-right:1px solid #c8c8c8;flex:none}
.help{width:672px;padding-left:3px}
.def{width:117px;padding-left:6px}
.w101{width:101px}
.w71{width:71px}
.w68{width:68px}
.w70{width:70px}
.w66{width:66px}
.conn{display:flex;align-items:center;gap:4px;padding-left:5px;border:0}
.m-blue{fill:none;stroke:#2f5fa8;stroke-width:6;stroke-dasharray:1 1}
.m-olive{fill:none;stroke:#7d8a1e;stroke-width:9;stroke-dasharray:1 1}
.m-mask{fill:#f0f0f0}
```
FILE: chart.js
```js
(function () {
  var NS = 'http://www.w3.org/2000/svg';
  function el(parent, name, attrs) {
    var e = document.createElementNS(NS, name);
    for (var k in attrs) e.setAttribute(k, attrs[k]);
    parent.appendChild(e);
    return e;
  }
  var seed = 20221205;
  function rnd() {
    seed |= 0; seed = seed + 0x6D2B79F5 | 0;
    var t = Math.imul(seed ^ seed >>> 15, 1 | seed);
    t = t + Math.imul(t ^ t >>> 7, 61 | t) ^ t;
    return ((t ^ t >>> 14) >>> 0) / 4294967296;
  }
  function interp(p, x) {
    if (x <= p[0]) return p[1];
    for (var i = 2; i < p.length; i += 2) {
      if (x <= p[i]) {
        var f = (x - p[i - 2]) / (p[i] - p[i - 2]);
        return p[i - 1] + (p[i + 1] - p[i - 1]) * f;
      }
    }
    return p[p.length - 1];
  }
  function readPts(line) {
    return line.getAttribute('points').trim().split(/\s+/).map(function (s) { return s.split(',').map(Number); });
  }
  function writePts(line, pts) {
    line.setAttribute('points', pts.map(function (p) { return p[0].toFixed(1) + ',' + p[1].toFixed(1); }).join(' '));
  }

  /* the support line moves in flat steps, not in diagonals */
  document.querySelectorAll('.gstep').forEach(function (line) {
    var p = readPts(line), out = [p[0]];
    for (var i = 1; i < p.length; i++) {
      var a = p[i - 1], b = p[i], dx = b[0] - a[0], n = Math.round(dx / 11);
      if (n < 2) { out.push(b); continue; }
      for (var j = 1; j <= n; j++) {
        var xe = a[0] + dx * j / n, ye = a[1] + (b[1] - a[1]) * j / n, ys = a[1] + (b[1] - a[1]) * (j - 1) / n;
        out.push([xe - 3, ys]);
        out.push([xe, ye]);
      }
    }
    writePts(line, out);
  });

  /* the pane 2 oscillators are smooth curves */
  document.querySelectorAll('.p2red,.p2lime').forEach(function (line) {
    var p = readPts(line);
    for (var it = 0; it < 2; it++) {
      var out = [p[0]];
      for (var i = 0; i < p.length - 1; i++) {
        var a = p[i], b = p[i + 1];
        out.push([a[0] * .75 + b[0] * .25, a[1] * .75 + b[1] * .25]);
        out.push([a[0] * .25 + b[0] * .75, a[1] * .25 + b[1] * .75]);
      }
      out.push(p[p.length - 1]);
      p = out;
    }
    writePts(line, p);
  });

  var price = [5,242,20,243,35,250,50,240,65,225,80,212,90,218,100,235,110,230,120,240,128,265,140,265,155,255,175,250,185,290,195,300,210,290,225,340,240,320,255,322,270,322,285,320,295,300,305,260,315,235,322,260,335,262,350,255,365,285,380,290,395,290,410,295,415,345,425,350,440,340,445,355,455,375,465,385,470,395,485,380,495,370,500,330,510,315,520,335,530,340,545,360,555,370,570,380,585,390,590,370,600,350,610,330,620,315,635,320,650,325,665,290,680,280,695,265,710,245,725,240,740,220,755,230,770,240,785,200,800,190,815,175,825,150,830,115,845,115,860,105,880,105,890,130,900,115,915,105,935,105,960,100,970,125,985,115,1005,100,1020,105,1035,115,1050,125,1075,145];

  var gC = document.getElementById('candles');
  var wick = '', up = '', dn = '', yel = '', cya = '';
  var prev = null, ema = null, lastEma = null;
  for (var x = 5; x <= 1077; x += 4) {
    var base = interp(price, x);
    var close = Math.round(base + (rnd() - .5) * 20);
    var open = prev === null ? close + 3 : prev + Math.round((rnd() - .5) * 4);
    if (Math.abs(open - close) < 2) close = open + (rnd() > .5 ? 3 : -3);
    var top = Math.min(open, close), bot = Math.max(open, close);
    var hi = top - Math.round(rnd() * 9), lo = bot + Math.round(rnd() * 9);
    wick += 'M' + (x + .5) + ' ' + hi + 'V' + lo;
    var r = 'M' + (x - .5) + ' ' + (top + .5) + 'h2v' + (bot - top) + 'h-2z';
    if (close < open) up += r; else dn += r;
    ema = ema === null ? base - 5 : ema + (base - ema) * .22;
    if (lastEma !== null) {
      var seg = 'M' + (x - 4) + ' ' + lastEma.toFixed(1) + 'L' + x + ' ' + ema.toFixed(1);
      if (ema < base) yel += seg; else cya += seg;
    }
    lastEma = ema;
    prev = close;
  }
  el(gC, 'path', { d: cya, fill: 'none', stroke: '#c8f4f4', 'stroke-width': 1 });
  el(gC, 'path', { d: yel, fill: 'none', stroke: '#ffff40', 'stroke-width': 1 });
  el(gC, 'path', { d: wick, fill: 'none', stroke: '#000', 'stroke-width': 1 });
  el(gC, 'path', { d: up, fill: '#19d21e', stroke: '#000', 'stroke-width': 1 });
  el(gC, 'path', { d: dn, fill: '#f0641e', stroke: '#000', 'stroke-width': 1 });

  /* signal marks */
  var m = document.getElementById('marks');
  function hatch(x1, x2, y, col) {
    var d = '';
    for (var x = x1; x < x2; x += 3) d += 'M' + x + ' ' + (y + 3) + 'l2 -6';
    el(m, 'path', { d: d, fill: 'none', stroke: col, 'stroke-width': 1.5 });
  }
  [[91,131,218],[320,372,232],[510,560,317],[851,901,105],[964,994,100],[1031,1071,107]].forEach(function (a) { hatch(a[0], a[1], a[2], '#ffd21e'); });
  [[41,78,257],[231,279,335],[468,507,386],[579,632,395],[912,951,122]].forEach(function (a) { hatch(a[0], a[1], a[2], '#19f0f0'); });

  function bigArrow(cx, top, h, dir) {
    var w = 10, s = 3, y = function (v) { return dir > 0 ? top + v : top + h - v; };
    var wing = h * .66, notch = h * .52;
    var d = 'M' + cx + ' ' + y(0) + 'L' + (cx + w) + ' ' + y(wing) + 'L' + (cx + s) + ' ' + y(notch) +
      'V' + y(h) + 'H' + (cx - s) + 'V' + y(notch) + 'L' + (cx - w) + ' ' + y(wing) + 'Z';
    el(m, 'path', { d: d, fill: '#000' });
  }
  [[189,300,25],[229,331,20],[425,352,20],[453,381,24],[473,386,24]].forEach(function (a) { bigArrow(a[0], a[1], a[2], 1); });
  [[311,222,26],[321,211,18],[690,245,23],[700,241,23],[709,222,24],[742,190,24],[881,83,25]].forEach(function (a) { bigArrow(a[0], a[1], a[2], -1); });

  function smallArrow(cx, top, col, dir) {
    var h = 14, y = function (v) { return dir > 0 ? top + v : top + h - v; };
    var d = 'M' + cx + ' ' + y(0) + 'L' + (cx + 5) + ' ' + y(7) + 'L' + (cx + 1.5) + ' ' + y(5.5) + 'V' + y(h) + 'H' + (cx - 1.5) + 'V' + y(5.5) + 'L' + (cx - 5) + ' ' + y(7) + 'Z';
    el(m, 'path', { d: d, fill: col });
  }
  smallArrow(285, 350, '#0000ff', 1);
  smallArrow(1077, 150, '#0000ff', 1);
  smallArrow(89, 188, '#b01818', -1);
  smallArrow(321, 201, '#a82020', -1);
  smallArrow(1005, 74, '#a82020', -1);

  function cross(cx, cy, col) {
    var r = 2.5;
    el(m, 'path', { d: 'M' + (cx - r) + ' ' + (cy - r) + 'l' + 2 * r + ' ' + 2 * r + 'M' + (cx + r) + ' ' + (cy - r) + 'l' + -2 * r + ' ' + 2 * r, fill: 'none', stroke: col, 'stroke-width': 1.5 });
  }
  [[89,203],[321,217],[505,300],[861,92],[1004,87]].forEach(function (a) { cross(a[0], a[1], '#e81414'); });
  [[221,345],[285,349],[465,417],[885,145],[977,138],[1077,153]].forEach(function (a) { cross(a[0], a[1], '#6a5acd'); });

  function diag(cx, cy, col) {
    el(m, 'path', { d: 'M' + (cx - 5) + ' ' + (cy + 5) + 'L' + (cx + 4) + ' ' + (cy - 4) + 'M' + cx + ' ' + (cy - 4) + 'H' + (cx + 4) + 'V' + cy, fill: 'none', stroke: col, 'stroke-width': 1.500 });
  }
  [[189,327],[227,353],[231,351],[425,372]].forEach(function (a) { diag(a[0], a[1], '#14f014'); });
  [[826,120],[832,106],[801,172],[796,178]].forEach(function (a) {
    el(m, 'path', { d: 'M' + (a[0] - 5) + ' ' + (a[1] - 5) + 'L' + (a[0] + 4) + ' ' + (a[1] + 4) + 'M' + a[0] + ' ' + (a[1] + 4) + 'H' + (a[0] + 4) + 'V' + a[1], fill: 'none', stroke: '#e81414', 'stroke-width': 1.500 });
  });

  /* pane 2 histogram */
  var h2 = [5,0,138,-15,150,-20,158,-25,165,-5,170,0,178,-5,186,-30,195,-38,198,-14,205,-8,215,-18,225,-32,232,-15,238,10,245,-6,255,-8,265,-8,277,-6,285,-2,293,18,300,24,308,40,316,45,325,40,330,15,340,8,350,6,358,2,365,-10,375,-18,385,-15,395,-20,405,-20,412,-8,420,-25,430,-42,440,-28,450,-30,465,-35,475,-28,485,-15,490,3,495,6,505,45,515,38,525,15,533,3,540,-8,550,-18,565,-20,575,-22,585,-15,590,3,600,15,610,25,622,40,632,25,645,8,650,2,655,-3,660,22,670,25,680,25,700,27,720,22,740,18,750,20,755,10,760,-3,770,-3,780,25,800,28,815,30,825,35,833,48,845,35,860,25,870,15,880,6,890,-7,898,-10,906,-3,915,-5,925,6,940,6,950,8,958,2,965,-5,975,-10,985,-6,995,2,1005,8,1015,6,1025,2,1035,-5,1045,-15,1060,-14,1075,-15];
  var g2 = document.getElementById('hist2');
  var paths = { c: '', b: '', o: '', r: '' };
  for (x = 141; x <= 1077; x += 4) {
    var h = Math.round(interp(h2, x) * (.95 + rnd() * .12));
    if (h === 0) continue;
    var rect = 'M' + x + ' 492v' + (-h) + 'h3v' + h + 'z';
    if (h > 0) { if (h >= 12) paths.c += rect; else paths.b += rect; }
    else { if (h <= -12) paths.o += rect; else paths.r += rect; }
  }
  el(g2, 'path', { d: paths.c, fill: '#00ffff' });
  el(g2, 'path', { d: paths.b, fill: '#0000ff' });
  el(g2, 'path', { d: paths.o, fill: '#ff6347' });
  el(g2, 'path', { d: paths.r, fill: '#a52a2a' });

  /* pane 3 histogram */
  var h3 = [5,0,138,-15,150,-18,160,-15,170,-10,176,-35,190,-30,195,-20,210,-25,222,-32,235,-25,245,-15,258,-10,275,-10,290,-8,292,8,303,20,314,29,322,16,335,18,350,14,362,6,372,4,380,-3,395,2,405,3,412,-7,420,-30,430,-25,445,-22,460,-30,475,-25,490,-15,494,-6,500,2,510,0,520,-5,540,-8,555,-15,570,-20,585,-12,596,-4,600,8,610,15,620,30,630,20,645,20,650,10,660,15,672,28,685,25,700,25,715,25,730,18,750,15,770,23,785,25,800,18,815,25,830,30,845,35,860,25,880,15,895,12,905,12,925,12,945,14,955,14,965,5,975,2,990,5,1000,8,1010,22,1018,12,1025,8,1030,-3,1036,-12,1045,-25,1060,-30,1075,-30];
  var g3 = document.getElementById('hist3');
  var wd = '', kd = '';
  for (x = 141; x <= 1075; x += 4) {
    h = Math.round(interp(h3, x) * (.88 + rnd() * .2));
    if (h === 0) continue;
    if (x >= 176 && x <= 186) { kd += 'M' + x + ' 583h3.5v37h-3.500z'; continue; }
    if (x === 1061) { kd += 'M1060 583h3v37h-3z'; continue; }
    wd += 'M' + x + ' 583v' + (-h) + 'h3v' + h + 'z';
  }
  el(g3, 'path', { d: wd, fill: '#fff' });
  el(g3, 'path', { d: kd, fill: '#000' });

  /* pane 2 dashed state rows */
  var segs = document.getElementById('segs');
  var rows = [
    { y: 525, s: [[138,173,'g'],[173,191,'r'],[213,226,'r'],[237,241,'l'],[245,285,'g'],[285,318,'l'],[318,354,'g'],[354,366,'r'],[377,387,'r'],[387,413,'g'],[413,425,'l'],[425,449,'g'],[449,459,'r'],[461,480,'r'],[489,506,'l'],[506,536,'g'],[536,545,'r'],[557,562,'r'],[568,578,'r'],[590,597,'l'],[605,640,'l'],[645,662,'l'],[672,700,'l'],[700,720,'g'],[741,760,'g'],[773,790,'g'],[805,840,'l'],[845,880,'g'],[883,900,'r'],[905,925,'g'],[942,962,'l'],[966,978,'r'],[990,1005,'g'],[1012,1018,'l'],[1030,1048,'r'],[1055,1062,'r'],[1068,1078,'r']] },
    { y: 532, s: [[138,178,'g'],[178,200,'r'],[203,234,'r'],[238,241,'g'],[250,290,'g'],[295,322,'l'],[325,334,'l'],[345,405,'g'],[405,482,'r'],[490,520,'g'],[530,570,'g'],[578,600,'g'],[605,650,'l'],[655,680,'l'],[665,754,'l'],[757,770,'g'],[773,835,'l'],[835,865,'l'],[870,890,'g'],[890,940,'g'],[942,953,'l'],[960,985,'g'],[1005,1035,'g'],[1038,1078,'r']] }
  ];
  var colors = { g: '#808080', r: '#ff0000', l: '#80ff00' };
  rows.forEach(function (row) {
    row.s.forEach(function (s) {
      el(segs, 'line', { x1: s[0], y1: row.y + .5, x2: s[1], y2: row.y + .5, stroke: colors[s[2]], 'stroke-width': 2 });
    });
  });

  /* pane 4 state squares */
  var sq = document.getElementById('squares');
  var r1 = [[138,237,'r'],[237,363,'b'],[363,488,'r'],[488,555,'b'],[555,587,'r'],[587,883,'b'],[883,900,'r'],[900,907,'b'],[907,920,'r'],[920,964,'b'],[964,1000,'r'],[1000,1035,'b'],[1035,1079,'r']];
  var r2 = [[5,24,'b'],[24,44,'r'],[44,90,'b'],[90,160,'r'],[160,180,'b'],[180,243,'r'],[243,275,'b'],[275,371,'r'],[371,575,'b'],[575,587,'r'],[587,651,'b'],[651,664,'r'],[664,760,'b'],[760,771,'r'],[771,856,'b'],[856,863,'r'],[863,880,'b'],[880,890,'r'],[890,903,'b'],[903,918,'r'],[918,964,'b'],[964,996,'r'],[996,1027,'b'],[1027,1079,'r']];
  function row(arr, y) {
    arr.forEach(function (s) {
      el(sq, 'line', { x1: s[0], y1: y, x2: s[1], y2: y, stroke: s[2] === 'r' ? '#ff0000' : '#0000ff', 'stroke-width': 5, 'stroke-dasharray': '3 1' });
    });
  }
  row(r1, 636);
  row(r2, 644.5);
})();
```
